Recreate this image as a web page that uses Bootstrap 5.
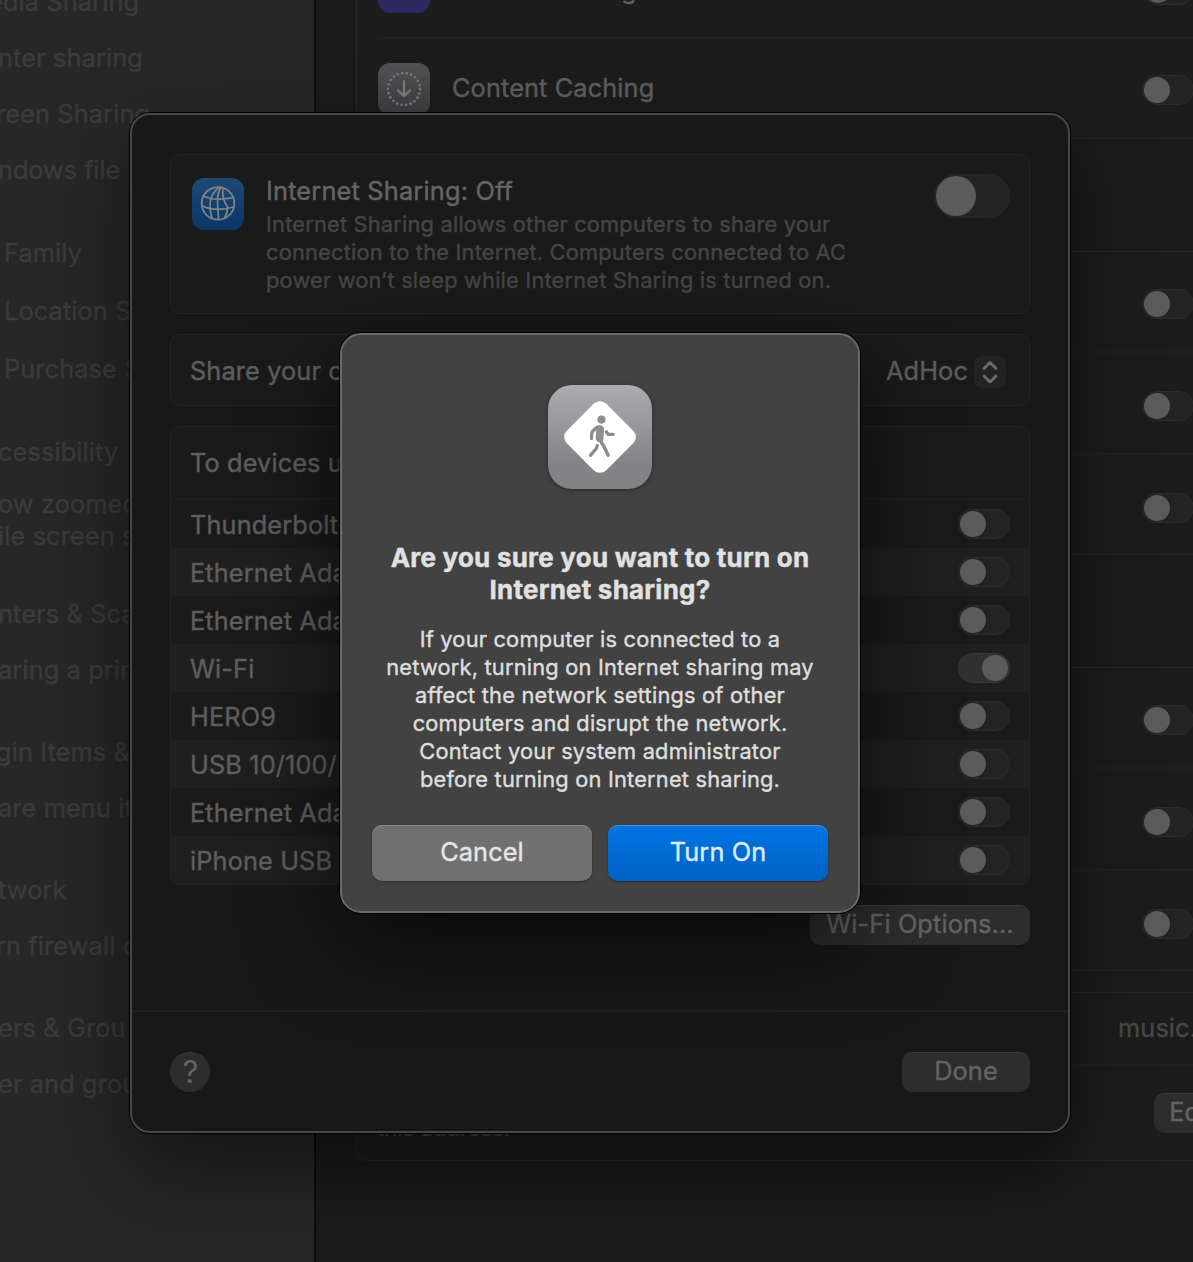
<!DOCTYPE html>
<html lang="en" data-bs-theme="dark">
<head>
<meta charset="utf-8">
<meta name="viewport" content="width=device-width, initial-scale=1">
<title>Sharing</title>
<link href="https://cdn.jsdelivr.net/npm/bootstrap@5.3.0/dist/css/bootstrap.min.css" rel="stylesheet">
<style>
body{font-family:Inter,"Liberation Sans",sans-serif;font-size:25.3px;line-height:32px;letter-spacing:.13px;-webkit-text-stroke:.4px currentColor;background:#1b1b1b;color:#5e5e5e;width:1193px;height:1262px;overflow:hidden;position:relative}
.window{height:1262px;overflow:hidden}
.side{width:316px;background:#272727;border-right:2px solid #0c0c0c;color:#3b3b3b;white-space:nowrap;overflow:hidden}
.side div{height:32px;margin:24px 0 0 -2px}
.side .first{margin:-14px 0 0 -12px}
.side .out{margin-left:-4px}
.side .near{margin-left:-2px;letter-spacing:-.05px}
.side .g51{margin-top:51px}.side .g50{margin-top:50px}.side .g46{margin-top:46px}.side .g26{margin-top:26px}.side .g20{margin-top:20px}.side .g0{margin-top:0}
.in5{padding-left:6px}
.pane{margin-left:40px;width:900px;flex:none}
.group{border:1px solid #272727;border-radius:10px;background:#1c1c1c;padding:0 20px}
.group .line{border-top:2px solid #202020}
.bg-row{padding:5px 0 0 765px;height:99px}
.bg-row+.bg-row{height:102px;padding-top:6px}
.bg-row+.bg-row+.bg-row{height:101px;padding-top:7px}
.pane .g1{height:149px;margin-top:-10px}
.pane .g2,.pane .g3{height:304px;margin-top:112px}
.pane .g4{height:169px;margin-top:21px}
.prior{height:46px;padding-left:1px}
.caching{height:103px;padding:1px 0 0 1px}
.caching .tile{margin-bottom:2px}
.cc{margin:0 0 4px 22px;width:690px;white-space:nowrap}
.prior-name{margin:0 0 31px 191px;width:522px}
.prior-toggle{margin-bottom:32px}
.host{height:71px;padding:19px 0 0 741px;color:#484848}
.addr{font-size:21.8px;line-height:28px;color:#454545;width:777px;padding-top:48px;white-space:nowrap}
.edit{width:76px;margin-top:27px}
.tile{width:52px;height:52px;border-radius:12px;flex:none;display:block}
.tile-purple{background:#2a2a61}
.tile-gray{background:linear-gradient(#525254,#3d3d40)}
.tile-blue{background:linear-gradient(#1d4a73,#0a3568);margin:23px 22px 0 1px}
.toggle{width:52px;height:30px;border-radius:15px;background:#232323;border:1px solid #2c2c2c;padding:1px;flex:none;display:flex}
.toggle::before{content:"";width:26px;height:26px;border-radius:50%;background:#5b5b5b}
.toggle.on{background:#313131;border-color:#383838;justify-content:flex-end}
.toggle.big{width:76px;height:44px;border-radius:22px;border-color:#262626;margin:19px -1px 0 0}
.toggle.big::before{width:40px;height:40px}
.push{background:#2d2d2d;border:0;border-top:1px solid #383838;border-radius:10px;color:#636363;height:40px;font-size:25.3px;line-height:32px;padding:0 0 4px;letter-spacing:inherit}
.sheet{left:130px;top:113px;width:940px;height:1020px;background:#181818;border:2px solid #484848;border-radius:20px;box-shadow:0 0 0 1px #000,0 36px 80px rgba(0,0,0,.5);padding:39px 38px 0}
.sheet .group{background:#1a1a1a;border-color:#242424}
.hero{height:160px}
.hero h2{font-size:25.4px;line-height:32px;margin:20px 0 0;font-weight:400;color:#656565;letter-spacing:.16px}
.hero p{font-size:21.8px;line-height:28px;letter-spacing:.2px;color:#454545;margin:3px 0 0;white-space:nowrap}
.sheet .from{height:72px;margin-top:20px;padding:2px 19px 0}
.stepper{width:32px;height:32px;border-radius:8px;background:#232323;margin:2px 4px 0 6px}
.devices{height:459px;margin-top:20px;overflow:hidden}
.sheet .devices{padding:0}
.devices .head{height:71px;padding:0 19px}
.devices .port{height:48px;padding:0 19px}
.port b{font-weight:400;padding-top:2px}
.devices .port:nth-child(even){background:#1f1f1f}
.devices .list{border-top:2px solid #1e1e1e}
.foot{margin:65px -38px 0;padding:40px 38px 0;border-top:2px solid #1f1f1f}
.help{width:40px;border-radius:50%;font-size:31px;padding:0 0 2px 1px;-webkit-text-stroke:0}
.w220{width:220px}.w128{width:128px}
.prompt{left:340px;top:333px;width:520px;height:580px;background:#424242;border:2px solid #696969;border-radius:21px;box-shadow:0 0 0 1px #000,0 30px 90px rgba(0,0,0,.6);padding:50px 30px 0}
.prompt h1{font-size:26px;line-height:32px;letter-spacing:.22px;font-weight:700;margin:53px 0 0;color:#e1e1e1}
.prompt p{font-size:21.8px;line-height:28px;letter-spacing:.2px;color:#dedede;margin:19px 0 0;white-space:nowrap}
.choices{gap:16px;margin-top:32px}
.choice{height:56px;border:0;border-radius:10px;flex:1;font-size:25.3px;line-height:52px;padding:0 0 3px;letter-spacing:inherit;color:#e6e6e6;box-shadow:0 1px 2px rgba(0,0,0,.35),inset 0 1px 0 #8a8a8a;background:#707070}
.choice.go{background:linear-gradient(#0074e2,#0062c4);box-shadow:0 1px 2px rgba(0,0,0,.35),inset 0 1px 0 #3b93ea;color:#dcebfa}
.sign{overflow:visible;filter:drop-shadow(0 1px 2px rgba(0,0,0,.4))}
</style>
<script src="https://cdn.jsdelivr.net/npm/bootstrap@5.3.0/dist/js/bootstrap.bundle.min.js"></script>
</head>
<body>
<div class="window d-flex">
  <nav class="side flex-shrink-0">
    <div class="first">edia Sharing</div>
    <div>nter sharing</div>
    <div class="out">reen Sharing</div>
    <div class="near">ndows file s</div>
    <div class="g51 in5">Family</div>
    <div class="g26 in5">Location S</div>
    <div class="g26 in5">Purchase S</div>
    <div class="g51">cessibility</div>
    <div class="g20">ow zoomed</div>
    <div class="g0">ile screen s</div>
    <div class="g46">nters &amp; Sca</div>
    <div>aring a prin</div>
    <div class="g50 out">gin Items &amp;</div>
    <div>are menu it</div>
    <div class="g50">twork</div>
    <div class="out">rn firewall o</div>
    <div class="g50">ers &amp; Grou</div>
    <div>er and grou</div>
  </nav>
  <main class="pane">
    <section class="group g1">
      <div class="prior d-flex align-items-end"><span class="tile tile-purple mb-4"></span><span class="prior-name">g</span><span class="toggle prior-toggle"></span></div>
      <div class="caching line d-flex align-items-center">
        <svg class="tile tile-gray" viewBox="0 0 52 52"><circle cx="26" cy="26" r="16" fill="none" stroke="#7b7b7c" stroke-width="2.6" stroke-linecap="round" stroke-dasharray="0 4.57"/><path d="M26 18v15m-6-5.800 6 6 6-6" fill="none" stroke="#7b7b7c" stroke-width="2.200" stroke-linecap="round" stroke-linejoin="round"/></svg>
        <span class="cc">Content Caching</span>
        <span class="toggle"></span>
      </div>
    </section>
    <section class="group g2">
      <div class="bg-row d-flex align-items-center"><span class="toggle"></span></div>
      <div class="bg-row line d-flex align-items-center"><span class="toggle"></span></div>
      <div class="bg-row line d-flex align-items-center"><span class="toggle"></span></div>
    </section>
    <section class="group g3">
      <div class="bg-row d-flex align-items-center"><span class="toggle"></span></div>
      <div class="bg-row line d-flex align-items-center"><span class="toggle"></span></div>
      <div class="bg-row line d-flex align-items-center"><span class="toggle"></span></div>
    </section>
    <section class="group g4">
      <div class="host">music.</div>
      <div class="line d-flex"><span class="addr">this address.</span><button class="push edit">Edit</button></div>
    </section>
  </main>
</div>

<div class="sheet position-absolute">
  <section class="group hero d-flex">
    <svg class="tile tile-blue" viewBox="0 0 52 52" fill="none" stroke="#7c8388" stroke-width="1.800" stroke-linecap="round"><circle cx="26" cy="25.400" r="16.300"/><path d="M27.500 9.300C21.700 13 18.200 20 18 27q0 7 2 13M29 9.300c-3.800 5-4 14-3 22.500l.5 9.500M31 10c-1 7 0 12.500 4.500 19 .2 4-.8 7.500-3 11M11 18q9 4 20 2.800 6-.3 10.300-1.500M9.700 27.800Q24 34 41.500 29"/></svg>
    <div>
      <h2>Internet Sharing: Off</h2>
      <p>Internet Sharing allows other computers to share your<br>connection to the Internet. Computers connected to AC<br>power won’t sleep while Internet Sharing is turned on.</p>
    </div>
    <span class="toggle big ms-auto"></span>
  </section>
  <section class="group from d-flex align-items-center">
    <span>Share your c</span><span class="ms-auto">AdHoc</span>
    <span class="stepper"><svg class="d-block" width="32" height="32" fill="none" stroke="#6c6c6c" stroke-width="2.800" stroke-linecap="round" stroke-linejoin="round"><path d="m10 12.500 6-6 6 6m-12 7.500 6 6 6-6"/></svg></span>
  </section>
  <section class="group devices">
    <div class="head d-flex align-items-center">To devices u</div>
    <div class="list">
      <div class="port d-flex align-items-center justify-content-between"><b>Thunderbolt</b><span class="toggle"></span></div>
      <div class="port d-flex align-items-center justify-content-between"><b>Ethernet Ada</b><span class="toggle"></span></div>
      <div class="port d-flex align-items-center justify-content-between"><b>Ethernet Ada</b><span class="toggle"></span></div>
      <div class="port d-flex align-items-center justify-content-between"><b>Wi-Fi</b><span class="toggle on"></span></div>
      <div class="port d-flex align-items-center justify-content-between"><b>HERO9</b><span class="toggle"></span></div>
      <div class="port d-flex align-items-center justify-content-between"><b>USB 10/100/</b><span class="toggle"></span></div>
      <div class="port d-flex align-items-center justify-content-between"><b>Ethernet Ada</b><span class="toggle"></span></div>
      <div class="port d-flex align-items-center justify-content-between"><b>iPhone USB</b><span class="toggle"></span></div>
    </div>
  </section>
  <div class="d-flex justify-content-end" style="margin-top:20px"><button class="push w220">Wi-Fi Options...</button></div>
  <footer class="foot d-flex justify-content-between">
    <button class="push help">?</button><button class="push w128">Done</button>
  </footer>
</div>

<div class="prompt position-absolute text-center" role="alertdialog">
  <svg class="sign d-block mx-auto" width="104" height="104" viewBox="0 0 104 104">
    <defs><linearGradient id="steel" x2="0" y2="1"><stop offset="0" stop-color="#adadb1"/><stop offset=".75" stop-color="#848388"/><stop offset="1" stop-color="#828186"/></linearGradient></defs>
    <rect width="104" height="104" rx="24" fill="url(#steel)"/>
    <rect x="24" y="24" width="56" height="56" rx="9" transform="rotate(45 52 52)" fill="#fff"/>
    <circle cx="53.500" cy="34.600" r="4.100" fill="#8f8e93"/>
    <path d="M47.500 41.500Q50 40 52.500 40.300 56 41 56 44.500L55.500 53.500 54.800 57 50 57Q47.500 55.500 47.700 53L48.200 46Z" fill="#8f8e93"/>
    <g fill="none" stroke="#8b8a8f" stroke-width="3.300" stroke-linecap="round" stroke-linejoin="round"><path d="M49 42.300 44.300 46.500Q43.500 48 43.500 53.500M58.300 46.800 60.300 49.400H65M51.500 54.500 56 61.500 60.200 70.200M49.300 60.500 48 64 42.600 70.200"/></g>
  </svg>
  <h1>Are you sure you want to turn on<br>Internet sharing?</h1>
  <p>If your computer is connected to a<br>network, turning on Internet sharing may<br>affect the network settings of other<br>computers and disrupt the network.<br>Contact your system administrator<br>before turning on Internet sharing.</p>
  <div class="choices d-flex"><button class="choice">Cancel</button><button class="choice go">Turn On</button></div>
</div>
</body>
</html>
